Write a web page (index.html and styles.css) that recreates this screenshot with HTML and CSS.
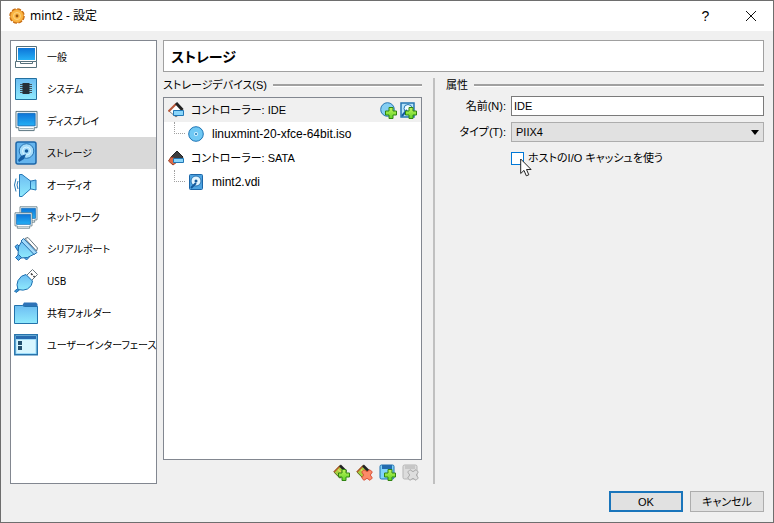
FILE: index.html
```
<!DOCTYPE html>
<html lang="ja">
<head>
  <meta charset="UTF-8">
  <meta name="viewport" content="width=device-width, initial-scale=1.0">
  <title>mint2 - 設定</title>
  <link rel="stylesheet" href="styles.css">
</head>
<body>
  <svg class="defs" aria-hidden="true">
    <defs>
      <linearGradient id="blue" x1="0" y1="0" x2="0" y2="1">
        <stop offset="0" stop-color="#0d74d8"/>
        <stop offset="1" stop-color="#25b0f5"/>
      </linearGradient>
      <linearGradient id="light" x1="0" y1="0" x2="0" y2="1">
        <stop offset="0" stop-color="#6dbdf2"/>
        <stop offset="1" stop-color="#8feafd"/>
      </linearGradient>
      <linearGradient id="green" x1="0" y1="0" x2="0" y2="1">
        <stop offset="0" stop-color="#c0f45a"/>
        <stop offset="1" stop-color="#5fd428"/>
      </linearGradient>
      <symbol id="screen" viewBox="0 0 24 22">
        <path d="M1 1h22v17h-3v3H4v-3H1z" fill="#fff" stroke="#56717c"/>
        <path d="M3 3h18v13H3z" fill="url(#blue)" stroke="#1671bb"/>
        <path d="M5 19h14" stroke="#8a9da5"/>
      </symbol>
      <symbol id="plus" viewBox="0 0 12 12">
        <path d="M4 .5h4V4h3.500v4H8v3.500H4V8H.5V4H4z" fill="url(#green)" stroke="#318512"/>
      </symbol>
      <symbol id="cross" viewBox="0 0 12 12">
        <path d="M3 .7l3 2 3-2L11.300 3l-2 3 2 3L9 11.300l-3-2-3 2L.7 9l2-3-2-3z" fill="#fb8a68" stroke="#d9503a"/>
      </symbol>
      <symbol id="disk" viewBox="0 0 22 24">
        <rect x="1" y="1" width="20" height="22" rx="2" fill="#65b5ee" stroke="#1c66a8" stroke-width="1.500"/>
        <circle cx="11.500" cy="10" r="7.300" fill="#a5ddfb" stroke="#2873b2"/>
        <circle cx="11.500" cy="10" r="4" fill="none" stroke="#d9f4ff"/>
        <circle cx="11.500" cy="10" r="1.800" fill="#155a9c"/>
        <path d="M11 13l-2 5-5 3-1-2 3-4z" fill="#145ca3"/>
      </symbol>
      <symbol id="disk-small" viewBox="0 0 16 16">
        <rect x="1.500" y=".5" width="13" height="15" rx="1" fill="#4da3e0" stroke="#1c66a8"/>
        <circle cx="8" cy="7" r="5" fill="#e4f6ff" stroke="#2873b2"/>
        <circle cx="8" cy="7" r="1.500" fill="#155a9c"/>
        <path d="M3 14l5-5" stroke="#155a9c" stroke-width="2"/>
      </symbol>
      <symbol id="controller" viewBox="0 0 16 16">
        <path d="M1 9l7-7 7 7-7 6z" fill="#fff" stroke="#7c7c7c"/>
        <path d="M.5 9.500L8 2" stroke="#b8583a" stroke-width="2"/>
        <path d="M8 1l6.500 7" stroke="#222" stroke-width="3"/>
        <path d="M5.500 8.500h10v5h-10z" fill="#8ad6fb" stroke="#2277b5"/>
      </symbol>
      <symbol id="sata" viewBox="0 0 16 16">
        <path d="M3 7l6-6 6 6-2 3H5z" fill="#3d3d3f" stroke="#252525"/>
        <path d="M3 7l-2.500 4L5 15l4-3-3-4z" fill="#dc6b48" stroke="#9b4128"/>
        <path d="M5.500 8.500h10v4h-10z" fill="#8ad6fb" stroke="#2277b5"/>
      </symbol>
      <symbol id="card" viewBox="0 0 16 16">
        <path d="M.8 8L7 1.500l6.500 6.500L7 14.200z" fill="#a9cf40" stroke="#55631e"/>
        <path d="M1 8l6-6" stroke="#b4572a" stroke-width="1.500"/>
        <path d="M7 1.500l6 6" stroke="#222" stroke-width="2.500"/>
        <path d="M5 5.500l5 5" stroke="#e3d65c" stroke-width="1.500"/>
      </symbol>
    </defs>
  </svg>

  <div class="window">
    <header class="titlebar">
      <svg class="gear" viewBox="0 0 16 16" aria-hidden="true">
        <circle cx="8" cy="8" r="6.800" fill="#f6a22b" stroke="#c46a12" stroke-width="2" stroke-dasharray="3.800 1.540"/>
        <circle cx="8" cy="8" r="6.500" fill="#fbb643" stroke="#d98220" stroke-width=".6"/>
        <circle cx="8" cy="8" r="3.500" fill="none" stroke="#fbd584"/>
        <circle cx="8" cy="8" r="1.400" fill="#9a5510"/>
      </svg>
      <h1 class="title">mint2 - 設定</h1>
      <button class="caption-button" type="button">?</button>
      <button class="caption-button" type="button" aria-label="閉じる">
        <svg width="12" height="12" viewBox="0 0 12 12"><path d="M1 1l10 10M11 1L1 11" stroke="#111"/></svg>
      </button>
    </header>

    <div class="content">
      <nav class="sidebar">
        <a class="nav-item" href="#general">
          <svg class="nav-icon" viewBox="0 0 24 24">
            <path d="M2.500 1.500h20v15h-20z" fill="#fff" stroke="#56717c"/>
            <path d="M4 3h17v12H4z" fill="url(#blue)"/>
            <path d="M1.500 16.500h5v2h12v-2h4v6h-21z" fill="#fff" stroke="#56717c"/>
          </svg>
          <span>一般</span>
        </a>
        <a class="nav-item" href="#system">
          <svg class="nav-icon" viewBox="0 0 24 24">
            <path d="M1.500 1.500h21v21h-21z" fill="url(#light)" stroke="#23709f"/>
            <path d="M6 7.500h12M6 9.500h12M6 11.500h12M6 13.500h12M6 15.500h12" stroke="#44525c"/>
            <path d="M8.500 6h7v11h-7z" fill="#263039"/>
          </svg>
          <span>システム</span>
        </a>
        <a class="nav-item" href="#display">
          <svg class="nav-icon"><use href="#screen" x="1" y="1" width="23" height="22"/></svg>
          <span>ディスプレイ</span>
        </a>
        <a class="nav-item selected" href="#storage">
          <svg class="nav-icon"><use href="#disk" width="24" height="24"/></svg>
          <span>ストレージ</span>
        </a>
        <a class="nav-item" href="#audio">
          <svg class="nav-icon" viewBox="0 0 24 24">
            <path d="M15 8h2l5-1v10l-5-1h-2z" fill="url(#light)" stroke="#2578b5"/>
            <path d="M5.500 1.500H8L16.500 8v8L8 23.500H5.500z" fill="url(#light)" stroke="#2578b5"/>
            <path d="M4 8q-2 4 0 8M2 5.500q-3 6.500 0 13" fill="none" stroke="#2578b5"/>
          </svg>
          <span>オーディオ</span>
        </a>
        <a class="nav-item" href="#network">
          <svg class="nav-icon">
            <use href="#screen" x="5" y="1" width="19" height="17"/>
            <use href="#screen" x="0" y="7" width="19" height="17"/>
          </svg>
          <span>ネットワーク</span>
        </a>
        <a class="nav-item" href="#serial">
          <svg class="nav-icon" viewBox="0 0 24 24">
            <path d="M11 1.500l3-1 9.500 10.500-1 3z" fill="#fff" stroke="#65747d"/>
            <path d="M1 9.500l2.500-2L7 11l-3 3zM9 19.500l4-1 2 2-2.500 2.500z" fill="#56aeea" stroke="#1f69ab"/>
            <path d="M8 4l12.500 13-7 3.500L7 21l-3-3 .5-8z" fill="url(#light)" stroke="#1f69ab"/>
            <path d="M9.500 1.500l13.500 14-3 2L7 4z" fill="#a4dafa" stroke="#2770ac"/>
            <path d="M4.500 17.500l3 3-3 3-3-3z" fill="#56aeea" stroke="#1f69ab"/>
          </svg>
          <span>シリアルポート</span>
        </a>
        <a class="nav-item" href="#usb">
          <svg class="nav-icon" viewBox="0 0 24 24">
            <path d="M12.500 6.500l6-6 5 5-6 6z" fill="#fff" stroke="#68737a"/>
            <path d="M17 4.500l1.500 1.500M19.500 7l1 1" stroke="#333" stroke-width="1.500"/>
            <path d="M4 19.500l-3.500 2.500 1.500 1.500 3.500-2.500z" fill="#3b93d6" stroke="#1f70b0"/>
            <path d="M12 5.500l6.500 6.500q0 5-5 8-4 2-9.500.5-2-5 0-9 3-5.500 8-6z" fill="url(#light)" stroke="#1f70b0"/>
          </svg>
          <span>USB</span>
        </a>
        <a class="nav-item" href="#shared">
          <svg class="nav-icon" viewBox="0 0 24 24">
            <path d="M8 5l2-3.500h12L23.500 3v5H8z" fill="#2d73b7"/>
            <path d="M.5 4.500h8l2 1h13v17H.5z" fill="url(#light)" stroke="#2372ab"/>
          </svg>
          <span>共有フォルダー</span>
        </a>
        <a class="nav-item" href="#ui">
          <svg class="nav-icon" viewBox="0 0 24 24">
            <path d="M.8 1.800h22.500v20H.8z" fill="#9ddcfa" stroke="#2874ac" stroke-width="1.500"/>
            <path d="M2 3h20v3H2z" fill="#286baf"/>
            <path d="M2.500 7h19v13h-19z" fill="#d8f6ff"/>
            <path d="M4 8h4v4H4zM4 13h4v4H4z" fill="#24506f"/>
          </svg>
          <span>ユーザーインターフェース</span>
        </a>
      </nav>

      <main class="page">
        <h2 class="page-title">ストレージ</h2>
        <div class="panes">
          <section class="devices">
            <h3 class="group-title">ストレージデバイス(S)</h3>
            <ul class="tree">
              <li class="row current">
                <svg class="small-icon"><use href="#controller"/></svg>
                <span class="row-label">コントローラー: IDE</span>
                <button class="icon-button" type="button" aria-label="光学ドライブを追加">
                  <svg width="17" height="17" viewBox="0 0 17 17">
                    <circle cx="7.500" cy="7.500" r="6.800" fill="#84cef2" stroke="#2575b3"/>
                    <use href="#plus" x="5" y="5" width="12" height="12"/>
                  </svg>
                </button>
                <button class="icon-button" type="button" aria-label="ハードディスクを追加">
                  <svg width="17" height="17" viewBox="0 0 17 17">
                    <path d="M1 1h13v14H1z" fill="#b6e4fb" stroke="#2575b3" stroke-width="1.500"/>
                    <circle cx="8" cy="6.500" r="4" fill="#f0fbff" stroke="#2575b3"/>
                    <path d="M2 14l5-6" stroke="#155a9c" stroke-width="2"/>
                    <use href="#plus" x="5" y="5" width="12" height="12"/>
                  </svg>
                </button>
              </li>
              <li class="row child">
                <svg class="small-icon" viewBox="0 0 16 16">
                  <circle cx="8" cy="8" r="7.300" fill="#70c9f4" stroke="#1d74b5"/>
                  <circle cx="8" cy="8" r="2" fill="#d5f2ff"/>
                  <circle cx="8" cy="8" r="1" fill="#1d74b5"/>
                </svg>
                <span class="row-label">linuxmint-20-xfce-64bit.iso</span>
              </li>
              <li class="row">
                <svg class="small-icon"><use href="#sata"/></svg>
                <span class="row-label">コントローラー: SATA</span>
              </li>
              <li class="row child">
                <svg class="small-icon"><use href="#disk-small"/></svg>
                <span class="row-label">mint2.vdi</span>
              </li>
            </ul>
            <div class="toolbar">
              <button class="icon-button" type="button" aria-label="コントローラーを追加">
                <svg width="17" height="17" viewBox="0 0 17 17"><use href="#card" width="16" height="16"/><use href="#plus" x="5" y="5" width="12" height="12"/></svg>
              </button>
              <button class="icon-button" type="button" aria-label="コントローラーを削除">
                <svg width="17" height="17" viewBox="0 0 17 17"><use href="#card" width="16" height="16"/><use href="#cross" x="5" y="5" width="12" height="12"/></svg>
              </button>
              <button class="icon-button" type="button" aria-label="アタッチメントを追加">
                <svg width="17" height="17" viewBox="0 0 17 17">
                  <rect x="1" y="1" width="14" height="14" rx="1.500" fill="#80d4fa" stroke="#1f70b0"/>
                  <path d="M3 1h10v4H3z" fill="#236cae"/>
                  <use href="#plus" x="5" y="5" width="12" height="12"/>
                </svg>
              </button>
              <button class="icon-button" type="button" aria-label="アタッチメントを削除" disabled>
                <svg width="17" height="17" viewBox="0 0 17 17">
                  <rect x="1" y="1" width="14" height="14" rx="1.500" fill="#dcdcdc" stroke="#b5b5b5"/>
                  <path d="M3 1h10v4H3z" fill="#c6c6c6"/>
                  <path d="M8 5.700l3 2 3-2L16.300 8l-2 3 2 3-2.300 2.300-3-2-3 2L5.700 14l2-3-2-3z" fill="#dedede" stroke="#aaa"/>
                </svg>
              </button>
            </div>
          </section>

          <section class="attributes">
            <h3 class="group-title">属性</h3>
            <div class="form">
              <label class="form-label" for="name">名前(N):</label>
              <input class="text-box" type="text" id="name" value="IDE">
              <label class="form-label" for="type">タイプ(T):</label>
              <div class="select-wrap">
                <select id="type">
                  <option>PIIX4</option>
                </select>
                <svg class="arrow" width="8" height="5" viewBox="0 0 8 5"><path d="M0 0h8L4 5z"/></svg>
              </div>
              <div class="check-line">
                <input type="checkbox" id="cache">
                <label for="cache">ホストのI/O キャッシュを使う</label>
                <svg class="pointer" width="12" height="19" viewBox="0 0 12 19">
                  <path d="M.7 1v14.500L4 12.400l2.300 5.400 2.500-1-2.300-5.300h4.600z" fill="#fff" stroke="#222"/>
                </svg>
              </div>
            </div>
          </section>
        </div>
      </main>
    </div>

    <footer class="footer">
      <button class="push-button default" type="button">OK</button>
      <button class="push-button" type="button">キャンセル</button>
    </footer>
  </div>
</body>
</html>
```

FILE: styles.css
```
* {
  box-sizing: border-box;
}
body {
  margin: 0;
  font-family: "Liberation Sans", "Noto Sans CJK JP", sans-serif;
  font-size: 11px;
  line-height: 16px;
  font-feature-settings: "palt";
  color: #000;
}
h1, h2, h3, ul {
  margin: 0;
  padding: 0;
  font-size: 11px;
  font-weight: normal;
}
button, input, select {
  font: inherit;
  font-feature-settings: inherit;
  color: inherit;
}
svg {
  display: block;
  flex: none;
}
.defs {
  position: absolute;
  width: 0;
  height: 0;
}
.window {
  display: flex;
  flex-direction: column;
  min-height: 100vh;
  background: #f0f0f0;
  border: 1px solid #6e6e6e;
}

/* title bar */
.titlebar {
  display: flex;
  align-items: center;
  height: 30px;
  padding-left: 8px;
  background: #fff;
}
.gear {
  width: 16px;
  height: 16px;
}
.title {
  flex: 1;
  padding-left: 5px;
  font-family: "Noto Sans", "Noto Sans CJK JP", sans-serif;
  font-size: 12px;
}
.caption-button {
  display: flex;
  align-items: center;
  justify-content: center;
  width: 45px;
  height: 30px;
  padding: 0;
  border: none;
  background: none;
  font-size: 14px;
}

.content {
  flex: 1;
  display: flex;
  gap: 6px;
  padding: 9px 9px 0;
}

/* category list */
.sidebar {
  flex: none;
  width: 147px;
  background: #fff;
  border: 1px solid #828790;
}
.nav-item {
  display: flex;
  align-items: center;
  gap: 9px;
  height: 32px;
  padding-left: 3px;
  font-family: "Noto Sans", "Noto Sans CJK JP", sans-serif;
  font-size: 10px;
  color: #000;
  text-decoration: none;
  white-space: nowrap;
}
.nav-item.selected {
  background: #d9d9d9;
}
.nav-icon {
  width: 24px;
  height: 24px;
}

/* page */
.page {
  flex: 1;
  display: flex;
  flex-direction: column;
}
.page-title {
  height: 32px;
  padding-left: 7px;
  line-height: 32px;
  font-size: 14px;
  font-weight: bold;
  background: #fff;
  border: 1px solid #a0a0a0;
}
.panes {
  flex: 1;
  display: flex;
  padding-top: 6px;
}
.devices {
  flex: 0 0 270px;
  display: flex;
  flex-direction: column;
  padding-right: 11px;
}
.attributes {
  flex: 1;
  padding-left: 11px;
  border-left: 2px solid #c0c0c0;
}
.group-title {
  display: flex;
  align-items: center;
  gap: 6px;
  height: 14px;
  white-space: nowrap;
}
.group-title::after {
  content: "";
  flex: 1;
  height: 2px;
  background: #a0a0a0;
  border-bottom: 1px solid #fff;
}

/* device tree */
.tree {
  flex: 1;
  margin-top: 5px;
  list-style: none;
  background: #fff;
  border: 1px solid #828790;
}
.row {
  display: flex;
  align-items: center;
  height: 24px;
  padding: 0 4px;
}
.row.current {
  background: #f0f0f0;
}
.row-label {
  flex: 1;
  padding-left: 7px;
}
.row.child {
  font-size: 12px;
}
.row.child::before {
  content: "";
  width: 10px;
  height: 11px;
  margin: 0 3px 12px 6px;
  border-left: 1px dotted #a0a0a0;
  border-bottom: 1px dotted #a0a0a0;
}
.row.child .row-label {
  padding-left: 8px;
}
.small-icon {
  width: 16px;
  height: 16px;
}
.icon-button {
  padding: 0;
  border: none;
  background: none;
}
.row .icon-button {
  margin-left: 3px;
}
.toolbar {
  display: flex;
  justify-content: flex-end;
  align-items: center;
  gap: 6px;
  height: 24px;
  padding-right: 3px;
}

/* attributes form */
.form {
  display: grid;
  grid-template-columns: 60px 1fr;
  grid-auto-rows: 20px;
  gap: 6px 5px;
  align-items: center;
  padding-top: 4px;
}
.form-label {
  text-align: right;
  white-space: nowrap;
}
.text-box {
  width: 100%;
  height: 20px;
  padding: 0 2px;
  background: #fff;
  border: 1px solid #7a7a7a;
}
.select-wrap {
  position: relative;
}
.select-wrap select {
  display: block;
  appearance: none;
  width: 100%;
  height: 20px;
  padding: 0 4px;
  background: #e1e1e1;
  border: 1px solid #adadad;
  border-radius: 0;
}
.arrow {
  position: absolute;
  right: 5px;
  top: 8px;
  pointer-events: none;
}
.check-line {
  grid-column: 2;
  position: relative;
  display: flex;
  align-items: center;
  gap: 4px;
}
.check-line input {
  appearance: none;
  width: 13px;
  height: 13px;
  margin: 0;
  background: #fff;
  border: 1px solid #0078d7;
}
.pointer {
  position: absolute;
  left: 9px;
  top: 8px;
}

/* dialog buttons */
.footer {
  display: flex;
  justify-content: flex-end;
  gap: 7px;
  padding: 7px 9px 10px;
}
.push-button {
  width: 74px;
  height: 21px;
  padding: 0;
  line-height: 16px;
  background: #e1e1e1;
  border: 1px solid #adadad;
}
.push-button.default {
  border: 2px solid #1a75bb;
}
```
